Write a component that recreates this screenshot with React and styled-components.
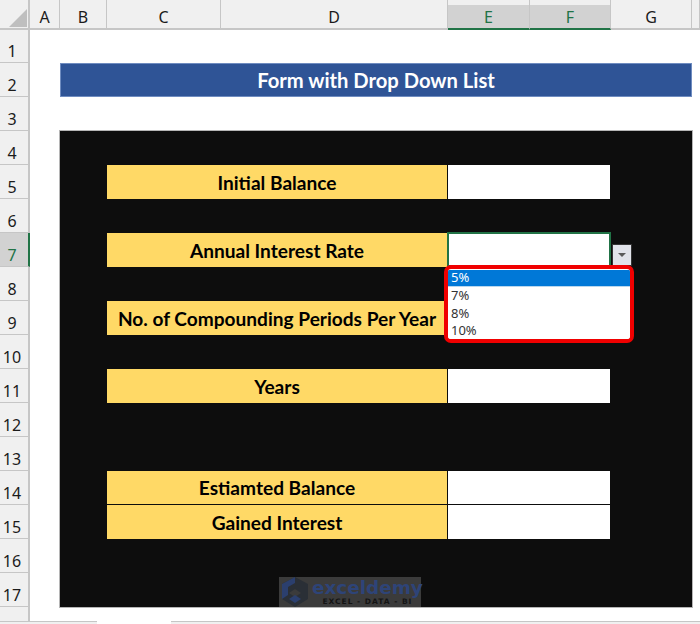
import React from "react";
import styled, { createGlobalStyle } from "styled-components";

const GlobalStyle = createGlobalStyle`
  html, body {
    margin: 0;
    padding: 0;
    background: #fff;
  }
`;

const Page = styled.div`
  width: 700px;
  height: 624px;
  overflow: hidden;
  position: relative;
  font-family: "Noto Sans", sans-serif;
`;

const Sheet = styled.div`
  display: grid;
  grid-template-columns: 30px 30px 47px 114px 227px 82px 81px 81px 1fr;
  grid-template-rows: 30px 33px repeat(16, 34px) 14px;
`;

const Corner = styled.div`
  grid-column: 1;
  grid-row: 1;
  background: #f0f0f0;
  border-right: 2px solid #c6c6c6;
  border-bottom: 2px solid #c6c6c6;
  box-sizing: border-box;
  padding: 9px 0 0 9px;
`;

const ColHead = styled.div`
  grid-row: 1;
  box-sizing: border-box;
  display: flex;
  align-items: flex-end;
  justify-content: center;
  padding-bottom: 1px;
  font-size: 16px;
  line-height: 20px;
  background: linear-gradient(#f0f0f0 5px, ${p => (p.$active ? "#d2d2d2" : "#f0f0f0")} 5px);
  color: ${p => (p.$active ? "#217346" : "#1b1b1b")};
  border-bottom: 2px solid ${p => (p.$active ? "#217346" : "#c6c6c6")};
  border-right: 1px solid #c6c6c6;
`;

const RowHead = styled.div`
  grid-column: 1;
  grid-row: ${p => p.$row + 1};
  box-sizing: border-box;
  display: flex;
  align-items: flex-end;
  justify-content: center;
  padding: 0 4px 1px 0;
  font-size: 16px;
  line-height: 20px;
  background: ${p => (p.$active ? "#d2d2d2" : "#f0f0f0")};
  color: ${p => (p.$active ? "#217346" : "#1b1b1b")};
  border-right: 2px solid ${p => (p.$active ? "#217346" : "#c6c6c6")};
  border-bottom: 1px solid #c6c6c6;
`;

const RowTail = styled.div`
  grid-column: 1;
  grid-row: 19;
  background: #f0f0f0;
  border-right: 2px solid #c6c6c6;
`;

const TitleBar = styled.div`
  grid-column: 3 / span 6;
  grid-row: 3;
  box-sizing: border-box;
  border: 1px solid #6f8cc0;
  background: #2f5496;
  color: #fff;
  font-family: Lato, sans-serif;
  font-weight: 700;
  font-size: 20.2px;
  display: flex;
  align-items: center;
  justify-content: center;
`;

const Panel = styled.div`
  grid-column: 3 / span 6;
  grid-row: 5 / span 14;
  position: relative;
  background: #0d0d0d;
  outline: 1px solid #b5b5b5;
  box-sizing: border-box;
  padding: 34px 82px 0 47px;
  display: flex;
  flex-direction: column;
`;

const FormRow = styled.div`
  display: grid;
  grid-template-columns: 341px 162px;
  height: 34px;
  margin-top: ${p => p.$gap || 0}px;
  border-bottom: ${p => (p.$ruled ? "1px solid #0d0d0d" : "0")};
  box-sizing: border-box;
`;

const Label = styled.div`
  background: #ffd966;
  color: #000;
  font-family: Lato, sans-serif;
  font-weight: 700;
  font-size: 19.1px;
  display: flex;
  align-items: center;
  justify-content: center;
  box-sizing: border-box;
  border-right: 1px solid #0d0d0d;
  white-space: nowrap;
`;

const Field = styled.div`
  background: #fff;
  position: relative;
`;

const SelectedBorder = styled.div`
  position: absolute;
  left: -1px;
  top: -1px;
  width: 164px;
  height: 35px;
  box-sizing: border-box;
  border: 2px solid #217346;
`;

const DropButton = styled.div`
  position: absolute;
  left: 164px;
  top: 11px;
  width: 20px;
  height: 22px;
  background: #e1e3ea;
  border: 1px solid #333;
  box-sizing: border-box;
  display: flex;
  align-items: center;
  justify-content: center;
`;

const Arrow = styled.div`
  width: 0;
  height: 0;
  border-left: 4px solid transparent;
  border-right: 4px solid transparent;
  border-top: 4px solid #5a5a5a;
`;

const Menu = styled.div`
  position: absolute;
  z-index: 2;
  left: -4px;
  top: 32px;
  width: 190px;
  height: 78px;
  box-sizing: border-box;
  border: 4px solid #f00000;
  border-radius: 7px;
  background: #fff;
  overflow: hidden;
  padding-top: 1px;
  font-family: "Noto Sans", sans-serif;
  font-size: 13px;
`;

const MenuItem = styled.div`
  height: ${p => (p.$selected ? 16 : 17.6)}px;
  line-height: ${p => (p.$selected ? 14 : 16)}px;
  padding-left: 3px;
  background: ${p => (p.$selected ? "#0078d7" : "#fff")};
  color: ${p => (p.$selected ? "#fff" : "#333")};
  border-bottom: ${p => (p.$selected ? "1px solid #b9d7ee" : "0")};
`;

const Watermark = styled.div`
  position: absolute;
  left: 219px;
  bottom: 0;
  width: 142px;
  height: 30px;
  background: #3b3b3b;
  display: flex;
  align-items: flex-start;
  gap: 2px;
  padding-left: 1px;
  box-sizing: border-box;
`;

const MarkText = styled.div`
  display: flex;
  flex-direction: column;
  align-items: center;
`;

const MarkName = styled.div`
  font-family: "DejaVu Sans", sans-serif;
  font-weight: 700;
  font-size: 18.4px;
  line-height: 19px;
  margin-top: 1px;
  color: #2e4478;
`;

const MarkSub = styled.div`
  font-family: "DejaVu Sans", sans-serif;
  font-weight: 700;
  font-size: 7.5px;
  letter-spacing: 1px;
  line-height: 9px;
  color: #141414;
  white-space: nowrap;
`;

const BottomBar = styled.div`
  position: absolute;
  left: 0;
  right: 0;
  top: 621px;
  height: 3px;
  display: flex;
`;

const SheetTab = styled.div`
  height: 3px;
  box-sizing: border-box;
  background: ${p => (p.$active ? "#fff" : "#f0f0f0")};
  border-top: ${p => (p.$active ? "0" : "1px solid #c6c6c6")};
  width: ${p => p.$w}px;
  flex: ${p => (p.$w ? "none" : 1)};
`;

const LogoIcon = () => (
  <svg width="30" height="33" viewBox="0 0 30 33" style={{ flex: "none", overflow: "visible", marginTop: "-1px" }}>
    <path d="M15 1 L28 8 V23 L15 31 L2 23 V8 Z" fill="#2a2f36" />
    <path d="M15 1 L2 8 V23 L8 19 V11 L15 7 Z" fill="#2b3f6e" />
    <path d="M15 13 L21 17 L15 21 L9 17 Z" fill="#3b3b3b" />
    <path d="M15 19 L21 23 L15 27 L9 23 Z" fill="#2b3f6e" />
  </svg>
);

const columns = [
  ["A"],
  ["B"],
  ["C"],
  ["D"],
  ["E", true],
  ["F", true],
  ["G"],
  [""],
];

const rows = Array.from({ length: 17 }, (_, i) => i + 1);

export default function App() {
  return (
    <Page>
      <GlobalStyle />
      <Sheet>
        <Corner>
          <svg width="18" height="18" viewBox="0 0 18 18" style={{ display: "block" }}>
            <path d="M18 0 V18 H0 Z" fill="#bfbfbf" />
          </svg>
        </Corner>
        {columns.map(([name, active]) => (
          <ColHead key={name} $active={active}>{name}</ColHead>
        ))}
        {rows.map(n => (
          <RowHead key={n} $row={n} $active={n === 7}>{n}</RowHead>
        ))}
        <RowTail />
        <TitleBar>Form with Drop Down List</TitleBar>
        <Panel>
          <FormRow>
            <Label>Initial Balance</Label>
            <Field />
          </FormRow>
          <FormRow $gap={34}>
            <Label>Annual Interest Rate</Label>
            <Field>
              <SelectedBorder />
              <DropButton><Arrow /></DropButton>
              <Menu>
                <MenuItem $selected>5%</MenuItem>
                <MenuItem>7%</MenuItem>
                <MenuItem>8%</MenuItem>
                <MenuItem>10%</MenuItem>
              </Menu>
            </Field>
          </FormRow>
          <FormRow $gap={34}>
            <Label>No. of Compounding Periods Per Year</Label>
            <Field />
          </FormRow>
          <FormRow $gap={34}>
            <Label>Years</Label>
            <Field />
          </FormRow>
          <FormRow $gap={68} $ruled>
            <Label>Estiamted Balance</Label>
            <Field />
          </FormRow>
          <FormRow>
            <Label>Gained Interest</Label>
            <Field />
          </FormRow>
          <Watermark>
            <LogoIcon />
            <MarkText>
              <MarkName>exceldemy</MarkName>
              <MarkSub>EXCEL - DATA - BI</MarkSub>
            </MarkText>
          </Watermark>
        </Panel>
      </Sheet>
      <BottomBar>
        <SheetTab $w={97} />
        <SheetTab $w={74} $active />
        <SheetTab />
      </BottomBar>
    </Page>
  );
}
